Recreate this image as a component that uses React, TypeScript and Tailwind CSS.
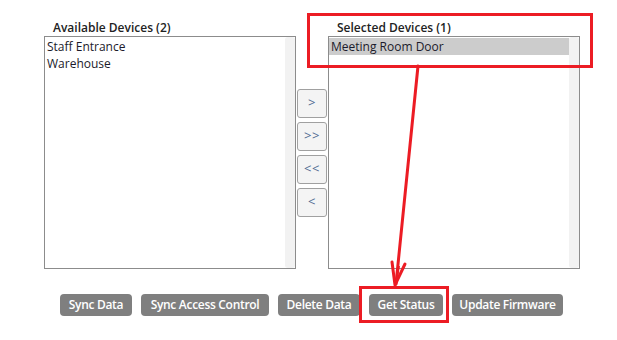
import { ReactNode } from "react";

const FONT = "font-['Segoe_UI','Open_Sans','Noto_Sans',sans-serif]";

function DeviceList({
  items,
  selected,
}: {
  items: string[];
  selected?: string;
}) {
  return (
    <div className="flex h-[233px] border border-[#8c8c8c] bg-white">
      <div className="flex-1 pt-[1px]">
        {items.map((it) => (
          <div
            key={it}
            className={`h-[17px] pl-[2px] text-[12px] leading-[17px] text-[#1b1b2b] ${
              it === selected ? "bg-[#cccccc]" : ""
            }`}
          >
            {it}
          </div>
        ))}
      </div>
      <div className="w-[10px] rounded-[3px] bg-[#f2f2f2]" />
    </div>
  );
}

function MoveButton({ children }: { children: ReactNode }) {
  return (
    <button className="flex h-[29px] w-[30px] items-center justify-center rounded-[3px] border border-[#a0a0a0] bg-[#f4f4f4] pb-[1px] text-[13px] tracking-[0.5px] text-[#506a92]">
      {children}
    </button>
  );
}

function ActionButton({ label, w }: { label: string; w: string }) {
  return (
    <button
      className={`${w} h-[22px] rounded-[4px] bg-[#7f7f7f] text-[12px] font-semibold tracking-[-0.3px] text-white`}
    >
      {label}
    </button>
  );
}

export default function App() {
  return (
    <div className={`relative h-[340px] w-[617px] overflow-hidden bg-white ${FONT}`}>
      <div className="flex pl-[44px] pt-[19px]">
        {/* Available */}
        <div className="w-[252px]">
          <div className="h-[17px] pl-[9px] text-[12px] font-semibold leading-[17px] text-[#222]">
            Available Devices (2)
          </div>
          <DeviceList items={["Staff Entrance", "Warehouse"]} />
        </div>

        {/* Move buttons */}
        <div className="flex w-[32px] flex-col items-center gap-[4px] pt-[70px]">
          <MoveButton>&gt;</MoveButton>
          <MoveButton>&gt;&gt;</MoveButton>
          <MoveButton>&lt;&lt;</MoveButton>
          <MoveButton>&lt;</MoveButton>
        </div>

        {/* Selected */}
        <div className="w-[252px]">
          <div className="h-[17px] pl-[9px] text-[12px] font-semibold leading-[17px] text-[#222]">
            Selected Devices (1)
          </div>
          <DeviceList items={["Meeting Room Door"]} selected="Meeting Room Door" />
        </div>
      </div>

      <div className="flex gap-[9px] pl-[60px] pt-[25px]">
        <ActionButton label="Sync Data" w="w-[72px]" />
        <ActionButton label="Sync Access Control" w="w-[128px]" />
        <ActionButton label="Delete Data" w="w-[82px]" />
        <ActionButton label="Get Status" w="w-[74px]" />
        <ActionButton label="Update Firmware" w="w-[111px]" />
      </div>

      {/* annotation overlay */}
      <svg
        className="pointer-events-none absolute left-0 top-0"
        width="617"
        height="340"
        viewBox="0 0 617 340"
      >
        <g fill="none" stroke="#ec1c24" strokeWidth="3">
          <rect x="308.5" y="14.5" width="283" height="52" />
          <rect x="360.5" y="287.5" width="87" height="34" />
          <path d="M418 66 L396 284" strokeLinecap="round" />
          <path d="M392 262 L395 285 L405 264" strokeLinejoin="round" strokeLinecap="round" />
          <path d="M396 283 L399 266" strokeWidth="2" />
        </g>
      </svg>
    </div>
  );
}
